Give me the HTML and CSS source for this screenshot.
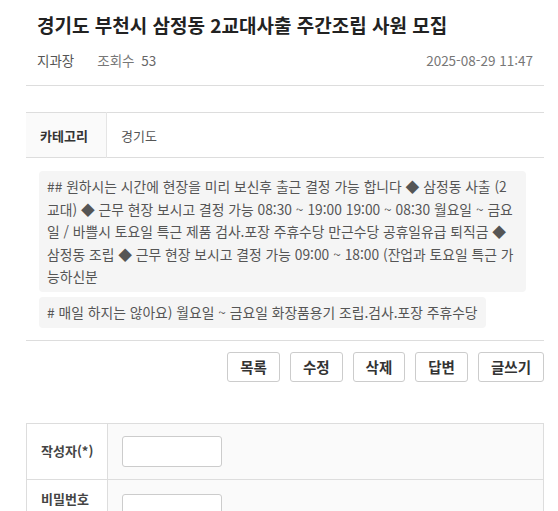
FILE: index.html
```html
<!DOCTYPE html>
<html lang="ko">

<head>
    <meta charset="UTF-8">
    <meta name="viewport" content="width=device-width, initial-scale=1.0">
    <title>경기도 부천시 삼정동 2교대사출 주간조립 사원 모집</title>
    <link rel="stylesheet" href="styles.css">
</head>

<body>
    <div class="wrap">
        <header class="view-head">
            <h1 class="view-title">경기도 부천시 삼정동 2교대사출 주간조립 사원 모집</h1>
            <div class="view-meta">
                <span class="writer">지과장</span>
                <span class="hit"><span class="hit-label">조회수</span> 53</span>
                <span class="date">2025-08-29 11:47</span>
            </div>
        </header>

        <table class="info-table">
            <tr>
                <th>카테고리</th>
                <td>경기도</td>
            </tr>
        </table>

        <div class="view-body">
            <p class="note">## 원하시는 시간에 현장을 미리 보신후 출근 결정 가능 합니다 ◆ 삼정동 사출 (2<br>교대) ◆ 근무 현장 보시고 결정 가능 08:30 ~ 19:00 19:00 ~ 08:30 월요일 ~ 금요<br>일 / 바쁠시 토요일 특근 제품 검사.포장 주휴수당 만근수당 공휴일유급 퇴직금 ◆<br>삼정동 조립 ◆ 근무 현장 보시고 결정 가능 09:00 ~ 18:00 (잔업과 토요일 특근 가<br>능하신분</p>
            <p class="note note-short"># 매일 하지는 않아요) 월요일 ~ 금요일 화장품용기 조립.검사.포장 주휴수당</p>
        </div>

        <div class="btn-row">
            <button type="button" class="btn">목록</button>
            <button type="button" class="btn">수정</button>
            <button type="button" class="btn">삭제</button>
            <button type="button" class="btn">답변</button>
            <button type="button" class="btn">글쓰기</button>
        </div>

        <table class="form-table">
            <tr>
                <th>작성자(*)</th>
                <td><input type="text" class="field"></td>
            </tr>
            <tr>
                <th>비밀번호(*)</th>
                <td><input type="password" class="field"></td>
            </tr>
        </table>
    </div>
</body>

</html>
```

FILE: styles.css
```css
body {
    margin: 0;
    font-family: "Noto Sans CJK KR", "Noto Sans", sans-serif;
    font-size: 13px;
    color: #333;
    background: #fff;
}

.wrap {
    padding: 0 14px 40px 26px;
}

.view-head {
    padding: 10px 11px 15px;
    border-bottom: 1px solid #ddd;
}

.view-title {
    margin: 0;
    font-size: 19px;
    line-height: 30px;
    font-weight: bold;
    color: #222;
}

.view-meta {
    display: flex;
    margin-top: 10px;
    line-height: 20px;
    font-size: 13.5px;
    color: #666;
}

.writer {
    color: #555;
    margin-right: 23px;
}

.hit-label {
    color: #777;
    margin-right: 3px;
}

.date {
    margin-left: auto;
    color: #777;
}

table {
    width: 100%;
    border-collapse: collapse;
}

.info-table {
    margin-top: 26px;
    border-top: 1px solid #ddd;
    border-bottom: 1px solid #ddd;
}

.info-table th,
.info-table td {
    height: 44px;
    padding: 0 14px;
    text-align: left;
}

.info-table th {
    width: 52px;
    background: #fafafa;
    border-right: 1px solid #e5e5e5;
    color: #333;
}

.info-table td {
    color: #555;
}

.view-body {
    margin: 13px 18px 0 13px;
    padding-bottom: 12px;
}

.note {
    margin: 0;
    padding: 4px 8px;
    font-size: 13.8px;
    line-height: 22.6px;
    background: #f5f5f5;
    border-radius: 4px;
    color: #555;
    white-space: nowrap;
}

.note-short {
    width: fit-content;
    margin-top: 5px;
}

.btn-row {
    display: flex;
    justify-content: flex-end;
    gap: 10px;
    padding-top: 11px;
    border-top: 1px solid #ddd;
}

.btn {
    height: 30px;
    padding: 0 12px;
    font-family: inherit;
    font-size: 14.5px;
    font-weight: bold;
    color: #333;
    background: #fff;
    border: 1px solid #ccc;
    border-radius: 3px;
    cursor: pointer;
}

.form-table {
    margin-top: 41px;
    border: 1px solid #ddd;
}

.form-table th,
.form-table td {
    padding: 12px 14px;
    border: 1px solid #ddd;
    text-align: left;
    vertical-align: middle;
}

.form-table th {
    width: 58px;
    padding: 8px 8px 8px 14px;
    line-height: 22px;
    color: #444;
    background: #fff;
}

.form-table td {
    background: #fafafa;
}

.field {
    display: block;
    width: 100px;
    height: 31px;
    box-sizing: border-box;
    border: 1px solid #ccc;
    border-radius: 3px;
    background: #fff;
}
```
